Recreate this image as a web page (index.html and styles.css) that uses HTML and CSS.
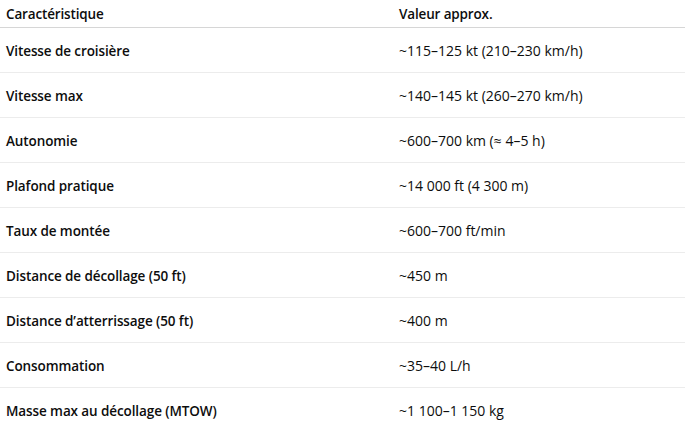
FILE: index.html
```html
<!DOCTYPE html>
<html lang="fr">
<head>
<meta charset="utf-8">
<title>Tableau</title>
<link rel="stylesheet" href="styles.css">
</head>
<body>
<table class="spec">
  <thead>
    <tr><th class="c1">Caractéristique</th><th class="c2">Valeur approx.</th></tr>
  </thead>
  <tbody>
    <tr><td class="k">Vitesse de croisière</td><td class="v">~115–125 kt (210–230 km/h)</td></tr>
    <tr><td class="k">Vitesse max</td><td class="v">~140–145 kt (260–270 km/h)</td></tr>
    <tr><td class="k">Autonomie</td><td class="v">~600–700 km (≈ 4–5 h)</td></tr>
    <tr><td class="k">Plafond pratique</td><td class="v">~14 000 ft (4 300 m)</td></tr>
    <tr><td class="k">Taux de montée</td><td class="v">~600–700 ft/min</td></tr>
    <tr><td class="k">Distance de décollage (50 ft)</td><td class="v">~450 m</td></tr>
    <tr><td class="k">Distance d’atterrissage (50 ft)</td><td class="v">~400 m</td></tr>
    <tr><td class="k">Consommation</td><td class="v">~35–40 L/h</td></tr>
    <tr><td class="k">Masse max au décollage (MTOW)</td><td class="v">~1 100–1 150 kg</td></tr>
  </tbody>
</table>
</body>
</html>
```
FILE: styles.css
```css
html, body {
  margin: 0;
  padding: 0;
  background: #ffffff;
}
body {
  font-family: "Open Sans", "Noto Sans", sans-serif;
  font-size: 14px;
  color: #0d0d0d;
}
.spec {
  width: 685px;
  border-collapse: collapse;
  table-layout: fixed;
}
.spec th, .spec td {
  text-align: left;
  padding: 0 6px;
  white-space: nowrap;
}
.spec th {
  height: 27px;
  font-weight: 600;
  font-size: 13.5px;
  letter-spacing: -0.15px;
  border-bottom: 1px solid #d6d6d6;
  vertical-align: middle;
}
.spec .c1 { width: 381px; }
.spec td {
  height: 43px;
  padding-top: 1px;
  border-bottom: 1px solid #ececec;
}
.spec .k {
  font-weight: 600;
  font-size: 13.5px;
  letter-spacing: -0.1px;
}
.spec .v { font-weight: 400; }
```
